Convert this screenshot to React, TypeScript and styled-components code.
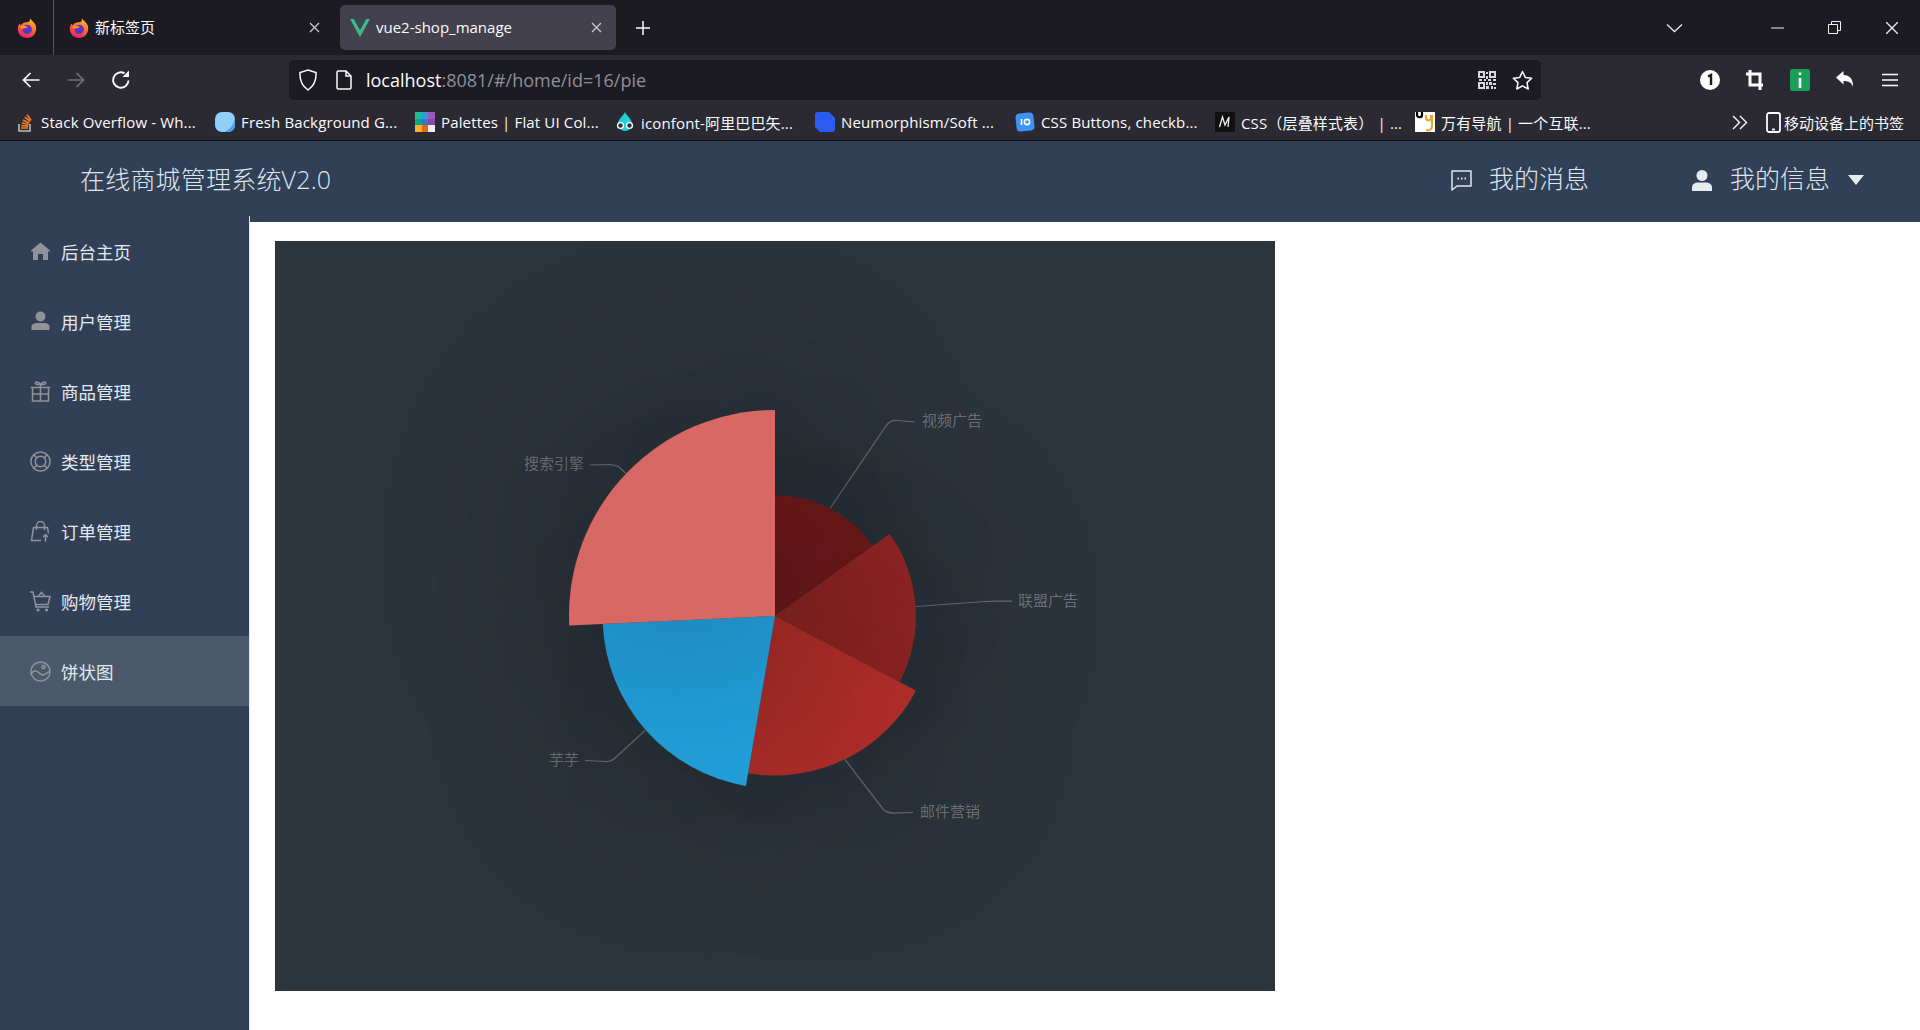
import React from "react";
import styled, { createGlobalStyle } from "styled-components";

const Global = createGlobalStyle`
  html, body {
    margin: 0;
    padding: 0;
    background: #fff;
    overflow: hidden;
  }
  * { box-sizing: border-box; }
`;

const UI_FONT = `"Open Sans", "Noto Sans CJK SC", sans-serif`;
const PAGE_FONT = `"Noto Sans CJK SC", "Liberation Sans", sans-serif`;

const Screen = styled.div`
  width: 1920px;
  height: 1030px;
  display: flex;
  flex-direction: column;
  overflow: hidden;
  font-family: ${UI_FONT};
`;

/* ---------- browser chrome ---------- */
const TabStrip = styled.div`
  height: 55px;
  background: #1c1b22;
  display: flex;
  align-items: flex-start;
  color: #fbfbfe;
  flex: none;
`;
const AppTab = styled.div`
  width: 54px;
  height: 55px;
  border-right: 1px solid #55545c;
  display: flex;
  align-items: center;
  justify-content: center;
  flex: none;
`;
const Tab = styled.div<{ $active?: boolean }>`
  width: 276px;
  height: 45px;
  margin: 5px 0 0 ${(p) => (p.$active ? "10px" : "0")};
  padding: 0 ${(p) => (p.$active ? "14px" : "10px")} 0 ${(p) => (p.$active ? "10px" : "15px")};
  border-radius: 5px;
  background: ${(p) => (p.$active ? "#42414d" : "transparent")};
  display: flex;
  align-items: center;
  gap: 6px;
  font-size: 15px;
  flex: none;
`;
const TabTitle = styled.span`
  flex: 1;
  white-space: nowrap;
  margin-top: -2px;
`;
const NewTab = styled.div`
  width: 54px;
  height: 55px;
  display: flex;
  align-items: center;
  justify-content: center;
  flex: none;
`;
const Spring = styled.div`
  flex: 1;
`;
const WindowButton = styled.div<{ $w: number }>`
  width: ${(p) => p.$w}px;
  height: 55px;
  display: flex;
  align-items: center;
  justify-content: center;
  flex: none;
`;

const NavBar = styled.div`
  height: 45px;
  background: #2b2a33;
  display: flex;
  align-items: flex-start;
  padding: 5px 0 0 8px;
  flex: none;
`;
const NavButton = styled.div`
  width: 45px;
  height: 40px;
  display: flex;
  align-items: center;
  justify-content: center;
  flex: none;
`;
const Address = styled.div`
  width: 1252px;
  height: 40px;
  margin: 0 146px;
  background: #1c1b22;
  border-radius: 5px;
  display: flex;
  align-items: center;
  padding: 0 2px 0 5px;
  flex: none;
  font-size: 18px;
`;
const AddressIcon = styled.span<{ $w: number }>`
  width: ${(p) => p.$w}px;
  display: flex;
  align-items: center;
  justify-content: center;
  flex: none;
`;
const Url = styled.div`
  flex: 1;
  color: #8f8f9d;
  white-space: nowrap;
  b {
    font-weight: 400;
    color: #fbfbfe;
  }
`;

const Bookmarks = styled.div`
  height: 41px;
  background: #2b2a33;
  border-bottom: 1px solid #0c0c0d;
  display: flex;
  align-items: flex-start;
  padding: 0 15px;
  flex: none;
`;
const Bookmark = styled.div`
  width: 200px;
  height: 40px;
  padding-top: 4px;
  display: flex;
  align-items: center;
  gap: 6px;
  flex: none;
  font-size: 15px;
  letter-spacing: 0.15px;
  color: #fbfbfe;
  white-space: nowrap;
  overflow: hidden;
`;
const BookmarkIcon = styled.span`
  width: 20px;
  height: 20px;
  display: flex;
  align-items: center;
  justify-content: center;
  flex: none;
`;
const MobileBookmarks = styled.div`
  display: flex;
  align-items: center;
  height: 40px;
  padding-top: 4px;
  gap: 3px;
  font-size: 15px;
  color: #fbfbfe;
  white-space: nowrap;
`;
const MoreButton = styled.div`
  width: 52px;
  height: 40px;
  padding-top: 4px;
  margin-left: 99px;
  display: flex;
  align-items: center;
  justify-content: center;
`;

/* ---------- the shop page ---------- */
const Header = styled.header`
  height: 81px;
  background: #324057;
  display: flex;
  align-items: center;
  padding: 0 56px 3px 80px;
  font-family: ${PAGE_FONT};
  color: #dfe6ee;
  font-size: 25px;
  flex: none;
`;
const Brand = styled.div`
  flex: 1;
  margin-top: -5px;
  font-family: ${UI_FONT};
  font-weight: 300;
  letter-spacing: 0.2px;
`;
const HeaderLink = styled.div<{ $gap: number; $after?: number }>`
  display: flex;
  align-items: center;
  gap: ${(p) => p.$gap}px;
  margin-right: ${(p) => p.$after ?? 0}px;
  span {
    margin-top: -6px;
    font-weight: 300;
  }
`;
const Body = styled.div`
  flex: 1;
  display: flex;
  min-height: 0;
`;
const Sidebar = styled.nav`
  width: 250px;
  margin-top: -6px;
  background: #324057;
  border-right: 1px solid #e6e6e6;
  position: relative;
  flex: none;
  font-family: ${PAGE_FONT};
`;
const MenuItem = styled.div<{ $active?: boolean }>`
  height: 70px;
  display: flex;
  align-items: center;
  gap: 10px;
  padding-left: 30px;
  color: #e4e9ef;
  font-size: 17.5px;
  background: ${(p) => (p.$active ? "#4a596c" : "transparent")};
`;
const MenuIcon = styled.svg`
  width: 21px;
  height: 21px;
  flex: none;
  color: #909399;
`;
const Main = styled.main`
  flex: 1;
  padding: 19px 0 0 25px;
`;
const ChartBox = styled.div`
  width: 1000px;
  height: 750px;
  background: #2c343c;
`;
const ChartSvg = styled.svg`
  display: block;
  width: 1000px;
  height: 750px;
  text {
    font-family: ${PAGE_FONT};
    font-size: 15px;
    fill: rgba(255, 255, 255, 0.33);
  }
`;

/* ---------- small drawings ---------- */
const Firefox = ({ id, size = 20 }: { id: string; size?: number }) => (
  <svg width={size} height={size} viewBox="0 0 20 20">
    <defs>
      <linearGradient id={id} x1="0.75" y1="0" x2="0.35" y2="1">
        <stop offset="0" stopColor="#ffc22a" />
        <stop offset="0.5" stopColor="#ff6b2c" />
        <stop offset="1" stopColor="#e3206a" />
      </linearGradient>
    </defs>
    <path d="M13 0c.4 2 4.300 3.500 5.700 7.500 1.600 4.700-.7 12.500-8.700 12.500C4.600 20 .8 16 .8 11c0-2.300.8-4.300 2-5.500.2 1 .6 1.500 1.100 1.800C5.200 4.800 8 4 10 4.300c2 .3 3.300-1.700 3-4.300z" fill={`url(#${id})`} />
    <circle cx="10.200" cy="11.400" r="4.700" fill="#5a35c8" />
    <path d="M3.300 8.300c2-.7 5-.8 7.500.6-1 .9-2.300 1.100-3.300 1.300-1 .2-2 1-3.500 0-.5-.5-.7-1.300-.7-1.900z" fill="#ff9524" />
  </svg>
);

const Close = ({ size = 11, color = "#c9c9cf", w = 1.3 }: { size?: number; color?: string; w?: number }) => (
  <svg width={size} height={size} viewBox="0 0 11 11">
    <path d="M1 1l9 9M10 1l-9 9" stroke={color} strokeWidth={w} fill="none" />
  </svg>
);

const Qr = () => (
  <svg width="18" height="18" viewBox="0 0 18 18" fill="#d8d8dc">
    <path fillRule="evenodd" d="M0 0h7v7H0zM2 2v3h3V2zM11 0h7v7h-7zM13 2v3h3V2zM0 11h7v7H0zM2 13v3h3v-3z" />
    <rect x="8" y="1" width="2" height="2" />
    <rect x="8" y="5" width="2" height="3" />
    <rect x="1" y="8" width="3" height="2" />
    <rect x="6" y="8" width="2" height="2" />
    <rect x="10" y="8" width="3" height="2" />
    <rect x="15" y="8" width="3" height="2" />
    <rect x="8" y="11" width="2" height="3" />
    <rect x="11" y="11" width="3" height="3" />
    <rect x="15" y="12" width="3" height="2" />
    <rect x="8" y="15" width="3" height="3" />
    <rect x="13" y="15" width="2" height="3" />
    <rect x="16" y="16" width="2" height="2" />
  </svg>
);

const bookmarkIcons: React.ReactNode[] = [
  <svg key="so" width="14" height="20" viewBox="0 0 14 20">
    <path d="M1 12v7h11v-7" fill="none" stroke="#bcbbbb" strokeWidth="1.6" />
    <path d="M3 16h7M3.200 13.500l7 .6M3.800 10.800l6.800 1.700M5 8l6.200 3M6.800 5.200l5.500 4.200M9 2.800l4 5.400" stroke="#f48024" strokeWidth="1.6" fill="none" />
  </svg>,
  <svg key="fresh" width="20" height="20" viewBox="0 0 20 20">
    <rect width="20" height="20" rx="7" fill="#8fd0fb" />
    <path d="M20 6v7a7 7 0 0 1-7 7H9c6-2 10-8 11-14z" fill="#4d9ff2" />
  </svg>,
  <svg key="pal" width="20" height="20" viewBox="0 0 3 3" shapeRendering="crispEdges">
    <rect x="0" y="0" width="1" height="1" fill="#1abc9c" />
    <rect x="1" y="0" width="1" height="1" fill="#3498db" />
    <rect x="2" y="0" width="1" height="1" fill="#9b59b6" />
    <rect x="0" y="1" width="1" height="1" fill="#16a085" />
    <rect x="1" y="1" width="1" height="1" fill="#2980b9" />
    <rect x="2" y="1" width="1" height="1" fill="#8e44ad" />
    <rect x="0" y="2" width="1" height="1" fill="#f9b42b" />
    <rect x="1" y="2" width="1" height="1" fill="#e8680f" />
    <rect x="2" y="2" width="1" height="1" fill="#ecf0f1" />
  </svg>,
  <svg key="iconfont" width="20" height="20" viewBox="0 0 20 20">
    <path d="M10 0c1 3 7 7 7 12a7 7 0 0 1-14 0C3 7 9 3 10 0z" fill="#1fd1d6" />
    <circle cx="5.500" cy="13.500" r="3.600" fill="#fff" />
    <circle cx="14.500" cy="13.500" r="3.600" fill="#fff" />
    <circle cx="5.500" cy="13.500" r="2.200" fill="#27323f" />
    <circle cx="14.500" cy="13.500" r="2.200" fill="#27323f" />
  </svg>,
  <svg key="neu" width="20" height="20" viewBox="0 0 20 20">
    <path d="M3 0h11l6 6v11a3 3 0 0 1-3 3H5l-5-5V3a3 3 0 0 1 3-3z" fill="#2b5bf0" />
  </svg>,
  <svg key="css" width="20" height="20" viewBox="0 0 20 20">
    <rect x="1" y="1" width="18" height="18" rx="4" fill="#3f92f2" transform="rotate(-6 10 10)" />
    <path d="M6.500 7v6" stroke="#fff" strokeWidth="1.6" />
    <circle cx="12" cy="10" r="2.600" stroke="#fff" strokeWidth="1.6" fill="none" />
  </svg>,
  <svg key="m" width="20" height="20" viewBox="0 0 20 20">
    <rect width="20" height="20" fill="#111113" />
    <path d="M4.500 15L7.500 5 10 13l4-8-1 10" stroke="#f0f0f0" strokeWidth="1.3" fill="none" />
  </svg>,
  <svg key="wy" width="20" height="20" viewBox="0 0 20 20">
    <rect width="20" height="20" fill="#fff" />
    <path d="M2 0v3c0 3 5 3 5 0V0" stroke="#000" strokeWidth="2.2" fill="none" />
    <path d="M11 3v3c0 3 5 3 5 0V3M17 3v11c0 4-3 5-6 4" stroke="#e9a82d" strokeWidth="2.2" fill="none" />
  </svg>,
];

const bookmarkTitles = [
  "Stack Overflow - Wh...",
  "Fresh Background G...",
  "Palettes | Flat UI Col...",
  "iconfont-阿里巴巴矢...",
  "Neumorphism/Soft ...",
  "CSS Buttons, checkb...",
  "CSS（层叠样式表） | ...",
  "万有导航 | 一个互联...",
];

const menuItems: { label: string; icon: React.ReactNode }[] = [
  {
    label: "后台主页",
    icon: <path d="M10.500 1.500L1 9.500v1h2V19h5v-6h5v6h5v-8.500h2v-1z" fill="currentColor" />,
  },
  {
    label: "用户管理",
    icon: (
      <g fill="currentColor">
        <circle cx="10.500" cy="5.500" r="5" />
        <path d="M1.500 19v-3c0-3 3-4 5-4h8c2 0 5 1 5 4v3z" />
      </g>
    ),
  },
  {
    label: "商品管理",
    icon: (
      <g fill="none" stroke="currentColor" strokeWidth="1.5">
        <path d="M2.500 6.500h16V20h-16zM.8 6.500h19.400M10.500 3.500V20M2.500 13h16" />
        <path d="M10.500 3.500C8 0 5 .5 5.500 2.500c.3 1 3 1 5 1zM10.500 3.500c2.500-3.500 5.500-3 5-1-.3 1-3 1-5 1z" />
      </g>
    ),
  },
  {
    label: "类型管理",
    icon: (
      <g fill="none" stroke="currentColor" strokeWidth="1.5">
        <circle cx="10.500" cy="10.500" r="9.600" />
        <circle cx="10.500" cy="10.500" r="5.300" />
        <path d="M3.700 3.700l3.100 3.100M17.300 3.700l-3.100 3.100M3.700 17.300l3.100-3.100M17.300 17.300l-3.100-3.100" />
      </g>
    ),
  },
  {
    label: "订单管理",
    icon: (
      <g fill="none" stroke="currentColor" strokeWidth="1.5">
        <path d="M11 19.500H1.500L3.500 6.500h14l1 6" />
        <path d="M6.500 9V4.500a4 4 0 0 1 8 0V9" />
        <path d="M15.500 20.500V14M13 16l2.500-2.500L18 16" />
      </g>
    ),
  },
  {
    label: "购物管理",
    icon: (
      <g fill="none" stroke="currentColor" strokeWidth="1.5">
        <path d="M0 1h3l3 15h13" />
        <path d="M4 5.500h16l-2 8H5.500" />
        <path d="M8 5.500l3.500-4 3.500 4" />
        <circle cx="8" cy="19" r=".8" />
        <circle cx="16.500" cy="19" r=".8" />
      </g>
    ),
  },
  {
    label: "饼状图",
    icon: (
      <g fill="none" stroke="currentColor" strokeWidth="1.5">
        <circle cx="10.500" cy="10.500" r="9.600" />
        <circle cx="13.500" cy="6" r="1.500" />
        <path d="M1 13c2.500-3.500 5-4 7.500-1.500s5 3 7 1.500c1.500-1 3-2.500 4.500-2.500" />
      </g>
    ),
  },
];

/* ---------- the rose chart ---------- */
const CX = 500;
const CY = 375;
const TOTAL = 1554;

const slices = [
  { value: 235, color: "#7a1f1c" },
  { value: 274, color: "#982826" },
  { value: 310, color: "#b42f2c" },
  { value: 335, color: "#21a2de" },
  { value: 400, color: "#d76763" },
];

function slicePath(from: number, to: number, r: number) {
  const pt = (a: number) => `${CX + r * Math.sin(a)} ${CY - r * Math.cos(a)}`;
  const large = to - from > Math.PI ? 1 : 0;
  return `M${CX} ${CY}L${pt(from)}A${r} ${r} 0 ${large} 1 ${pt(to)}Z`;
}

const labels = [
  { text: "视频广告", x: 647, y: 178, line: "M555 267.500L611 185Q615 179 622 179.500L640 181" },
  { text: "联盟广告", x: 743, y: 358, line: "M641 365.500L710 360.500Q716 360 722 360L737 360" },
  { text: "邮件营销", x: 645, y: 569, line: "M570 518.500L608 568Q612 572 618 572L638 571.500" },
  { text: "芋芋", x: 274, y: 517, line: "M370 489.500L340 517Q336 521 330 520.500L310 519.500" },
  { text: "搜索引擎", x: 249, y: 221, line: "M351 232.500L344 226Q340 223.500 335 223.500L315 224" },
];

const RoseChart = () => {
  let angle = 0;
  return (
    <ChartSvg viewBox="0 0 1000 750">
      <defs>
        <filter id="glow" filterUnits="userSpaceOnUse" x="-500" y="-500" width="2000" height="1750">
          <feDropShadow dx="0" dy="0" stdDeviation="120" floodColor="#000" floodOpacity="0.5" />
        </filter>
      </defs>
      {labels.map((l) => (
        <g key={l.text}>
          <path d={l.line} fill="none" stroke="rgba(255,255,255,0.3)" strokeWidth="1.25" />
          <text x={l.x} y={l.y} dominantBaseline="central">
            {l.text}
          </text>
        </g>
      ))}
      {slices.map((s) => {
        const from = angle;
        angle += (s.value / TOTAL) * Math.PI * 2;
        const r = 120.7 + (s.value - 235) * 0.517;
        return <path key={s.value} d={slicePath(from, angle, r)} fill={s.color} filter="url(#glow)" />;
      })}
    </ChartSvg>
  );
};

export default function App() {
  return (
    <Screen>
      <Global />
      <TabStrip>
        <AppTab>
          <Firefox id="ff-a" />
        </AppTab>
        <Tab>
          <Firefox id="ff-b" />
          <TabTitle>新标签页</TabTitle>
          <Close />
        </Tab>
        <Tab $active>
          <svg width="20" height="18" viewBox="0 0 20 18">
            <path d="M0 0h4l6 11L16 0h4L10 18z" fill="#41b883" />
            <path d="M4 0h3.500L10 5l2.500-5H16L10 11z" fill="#35495e" />
          </svg>
          <TabTitle>vue2-shop_manage</TabTitle>
          <Close />
        </Tab>
        <NewTab>
          <svg width="16" height="16" viewBox="0 0 16 16">
            <path d="M8 1v14M1 8h14" stroke="#fbfbfe" strokeWidth="1.5" />
          </svg>
        </NewTab>
        <Spring />
        <WindowButton $w={150}>
          <svg width="17" height="10" viewBox="0 0 17 10">
            <path d="M1 1.500l7.500 7 7.500-7" fill="none" stroke="#e8e8ea" strokeWidth="1.3" />
          </svg>
        </WindowButton>
        <WindowButton $w={57}>
          <svg width="13" height="2" viewBox="0 0 13 2">
            <path d="M0 1h13" stroke="#f0f0f0" strokeWidth="1" />
          </svg>
        </WindowButton>
        <WindowButton $w={57}>
          <svg width="13" height="13" viewBox="0 0 13 13">
            <path d="M.5 3.500h9v9h-9zM3.500 3V.5h9v9H10" fill="none" stroke="#f0f0f0" strokeWidth="1" />
          </svg>
        </WindowButton>
        <WindowButton $w={57}>
          <Close size={14} color="#f0f0f0" w={1} />
        </WindowButton>
      </TabStrip>

      <NavBar>
        <NavButton>
          <svg width="18" height="16" viewBox="0 0 18 16">
            <path d="M17.500 8H2M8.500 1L1.500 8l7 7" fill="none" stroke="#fbfbfe" strokeWidth="1.7" />
          </svg>
        </NavButton>
        <NavButton>
          <svg width="18" height="16" viewBox="0 0 18 16">
            <path d="M.5 8H16M9.500 1l7 7-7 7" fill="none" stroke="#6f6e75" strokeWidth="1.7" />
          </svg>
        </NavButton>
        <NavButton>
          <svg width="20" height="20" viewBox="0 0 20 20">
            <path d="M17.500 10.500A7.700 7.700 0 1 1 13.500 3.300" fill="none" stroke="#fbfbfe" strokeWidth="1.9" />
            <path d="M18 .5V7h-6.500z" fill="#fbfbfe" />
          </svg>
        </NavButton>
        <Address>
          <AddressIcon $w={28}>
            <svg width="18" height="22" viewBox="0 0 18 22">
              <path d="M9 1l8 2.500c.5 8-1.500 13-8 17.500C2.500 16.500.5 11.500 1 3.500z" fill="none" stroke="#fbfbfe" strokeWidth="1.5" />
            </svg>
          </AddressIcon>
          <AddressIcon $w={44}>
            <svg width="16" height="20" viewBox="0 0 16 20">
              <path d="M2.500 1H10l5 5v11.500a1.500 1.500 0 0 1-1.500 1.500h-11A1.500 1.500 0 0 1 1 17.500v-15A1.500 1.500 0 0 1 2.500 1zM10 1v5h5" fill="none" stroke="#fbfbfe" strokeWidth="1.5" />
            </svg>
          </AddressIcon>
          <Url>
            <b>localhost</b>:8081/#/home/id=16/pie
          </Url>
          <AddressIcon $w={36}>
            <Qr />
          </AddressIcon>
          <AddressIcon $w={34}>
            <svg width="21" height="21" viewBox="0 0 21 21">
              <path d="M10.500 1.500l2.800 5.900 6.400.8-4.700 4.400 1.200 6.400-5.700-3.100-5.700 3.100 1.200-6.400L1.300 8.200l6.400-.8z" fill="none" stroke="#fbfbfe" strokeWidth="1.5" strokeLinejoin="round" />
            </svg>
          </AddressIcon>
        </Address>
        <NavButton>
          <svg width="20" height="20" viewBox="0 0 20 20">
            <circle cx="10" cy="10" r="10" fill="#fff" />
            <path d="M8 6.500L11 5v10" fill="none" stroke="#1c1b22" strokeWidth="2.4" />
          </svg>
        </NavButton>
        <NavButton>
          <svg width="18" height="20" viewBox="0 0 18 20">
            <path d="M4 0v15h13M0 4h14v16" fill="none" stroke="#fbfbfe" strokeWidth="3" />
          </svg>
        </NavButton>
        <NavButton>
          <svg width="20" height="22" viewBox="0 0 20 22">
            <rect width="20" height="22" rx="2.500" fill="#18a058" />
            <rect x="8.700" y="9" width="2.600" height="10" fill="#fff" />
            <rect x="8.700" y="3.500" width="2.600" height="2.600" fill="#fff" />
          </svg>
        </NavButton>
        <NavButton>
          <svg width="18" height="18" viewBox="0 0 18 18">
            <path d="M0 6.500L7.500 0v4c6 0 10 4 9.500 12-1-4-4-6-9.500-6v3.500z" fill="#fbfbfe" />
          </svg>
        </NavButton>
        <NavButton>
          <svg width="16" height="14" viewBox="0 0 16 14">
            <path d="M0 1.500h16M0 7h16M0 12.500h16" stroke="#fbfbfe" strokeWidth="1.5" />
          </svg>
        </NavButton>
      </NavBar>

      <Bookmarks>
        {bookmarkTitles.map((t, i) => (
          <Bookmark key={t}>
            <BookmarkIcon>{bookmarkIcons[i]}</BookmarkIcon>
            <span>{t}</span>
          </Bookmark>
        ))}
        <MoreButton>
          <svg width="16" height="15" viewBox="0 0 16 15">
            <path d="M1 1l6.500 6.500L1 14M8 1l6.500 6.500L8 14" fill="none" stroke="#fbfbfe" strokeWidth="1.4" />
          </svg>
        </MoreButton>
        <MobileBookmarks>
          <svg width="15" height="21" viewBox="0 0 15 21">
            <rect x="1" y="1" width="13" height="19" rx="2" fill="none" stroke="#fbfbfe" strokeWidth="1.8" />
            <path d="M6 17.500h3" stroke="#fbfbfe" strokeWidth="1.8" />
          </svg>
          移动设备上的书签
        </MobileBookmarks>
      </Bookmarks>

      <Header>
        <Brand>在线商城管理系统V2.0</Brand>
        <HeaderLink $gap={17} $after={103}>
          <svg width="21" height="21" viewBox="0 0 21 21">
            <path d="M1 1h19v15H6l-5 4z" fill="none" stroke="#dfe6ee" strokeWidth="1.5" strokeLinejoin="round" />
            <path d="M6.500 8.500H8M10 8.500h1.500M13.500 8.500H15" stroke="#dfe6ee" strokeWidth="1.8" />
          </svg>
          <span>我的消息</span>
        </HeaderLink>
        <HeaderLink $gap={18}>
          <svg width="20" height="21" viewBox="0 0 20 21" fill="#e6ebf1">
            <circle cx="10" cy="5.500" r="5.500" />
            <path d="M0 21v-3.500C0 14 3 12.500 6 12.500h8c3 0 6 1.500 6 5V21z" />
          </svg>
          <span>我的信息</span>
          <svg width="16" height="10" viewBox="0 0 16 10">
            <path d="M0 0h16L8 10z" fill="#e6ebf1" />
          </svg>
        </HeaderLink>
      </Header>

      <Body>
        <Sidebar>
          {menuItems.map((m, i) => (
            <MenuItem key={m.label} $active={i === menuItems.length - 1}>
              <MenuIcon viewBox="0 0 21 21">{m.icon}</MenuIcon>
              {m.label}
            </MenuItem>
          ))}
        </Sidebar>
        <Main>
          <ChartBox>
            <RoseChart />
          </ChartBox>
        </Main>
      </Body>
    </Screen>
  );
}
